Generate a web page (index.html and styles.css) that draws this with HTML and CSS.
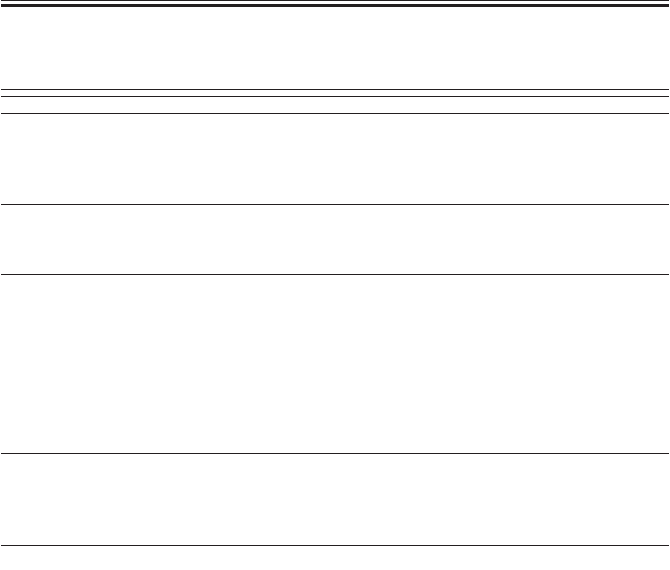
FILE: index.html
```html
<!DOCTYPE html>
<html lang="en">
<head>
<meta charset="utf-8">
<title>Table</title>
<link rel="stylesheet" href="styles.css">
</head>
<body>
<div class="sheet">
  <div class="top-rule"><div class="heavy"></div></div>
  <div class="row head"></div>
  <div class="row sub"></div>
  <div class="row colhead"></div>
  <div class="row r1"></div>
  <div class="row r2"></div>
  <div class="row r3"></div>
  <div class="row r4"></div>
</div>
</body>
</html>
```
FILE: styles.css
```css
html, body {
  margin: 0;
  padding: 0;
  background: #ffffff;
  font-family: "Liberation Sans", Arial, sans-serif;
}
.sheet {
  margin: 0 1px;
  display: flex;
  flex-direction: column;
}
.top-rule {
  border-top: 1px solid #231f20;
  padding-top: 3px;
}
.heavy {
  height: 3px;
  background: #231f20;
}
.row {
  border-bottom: 1px solid #231f20;
}
.head { height: 82px; }
.sub { height: 6px; }
.colhead { height: 16px; }
.r1 { height: 90px; }
.r2 { height: 69px; }
.r3 { height: 178px; }
.r4 { height: 91px; }
```
